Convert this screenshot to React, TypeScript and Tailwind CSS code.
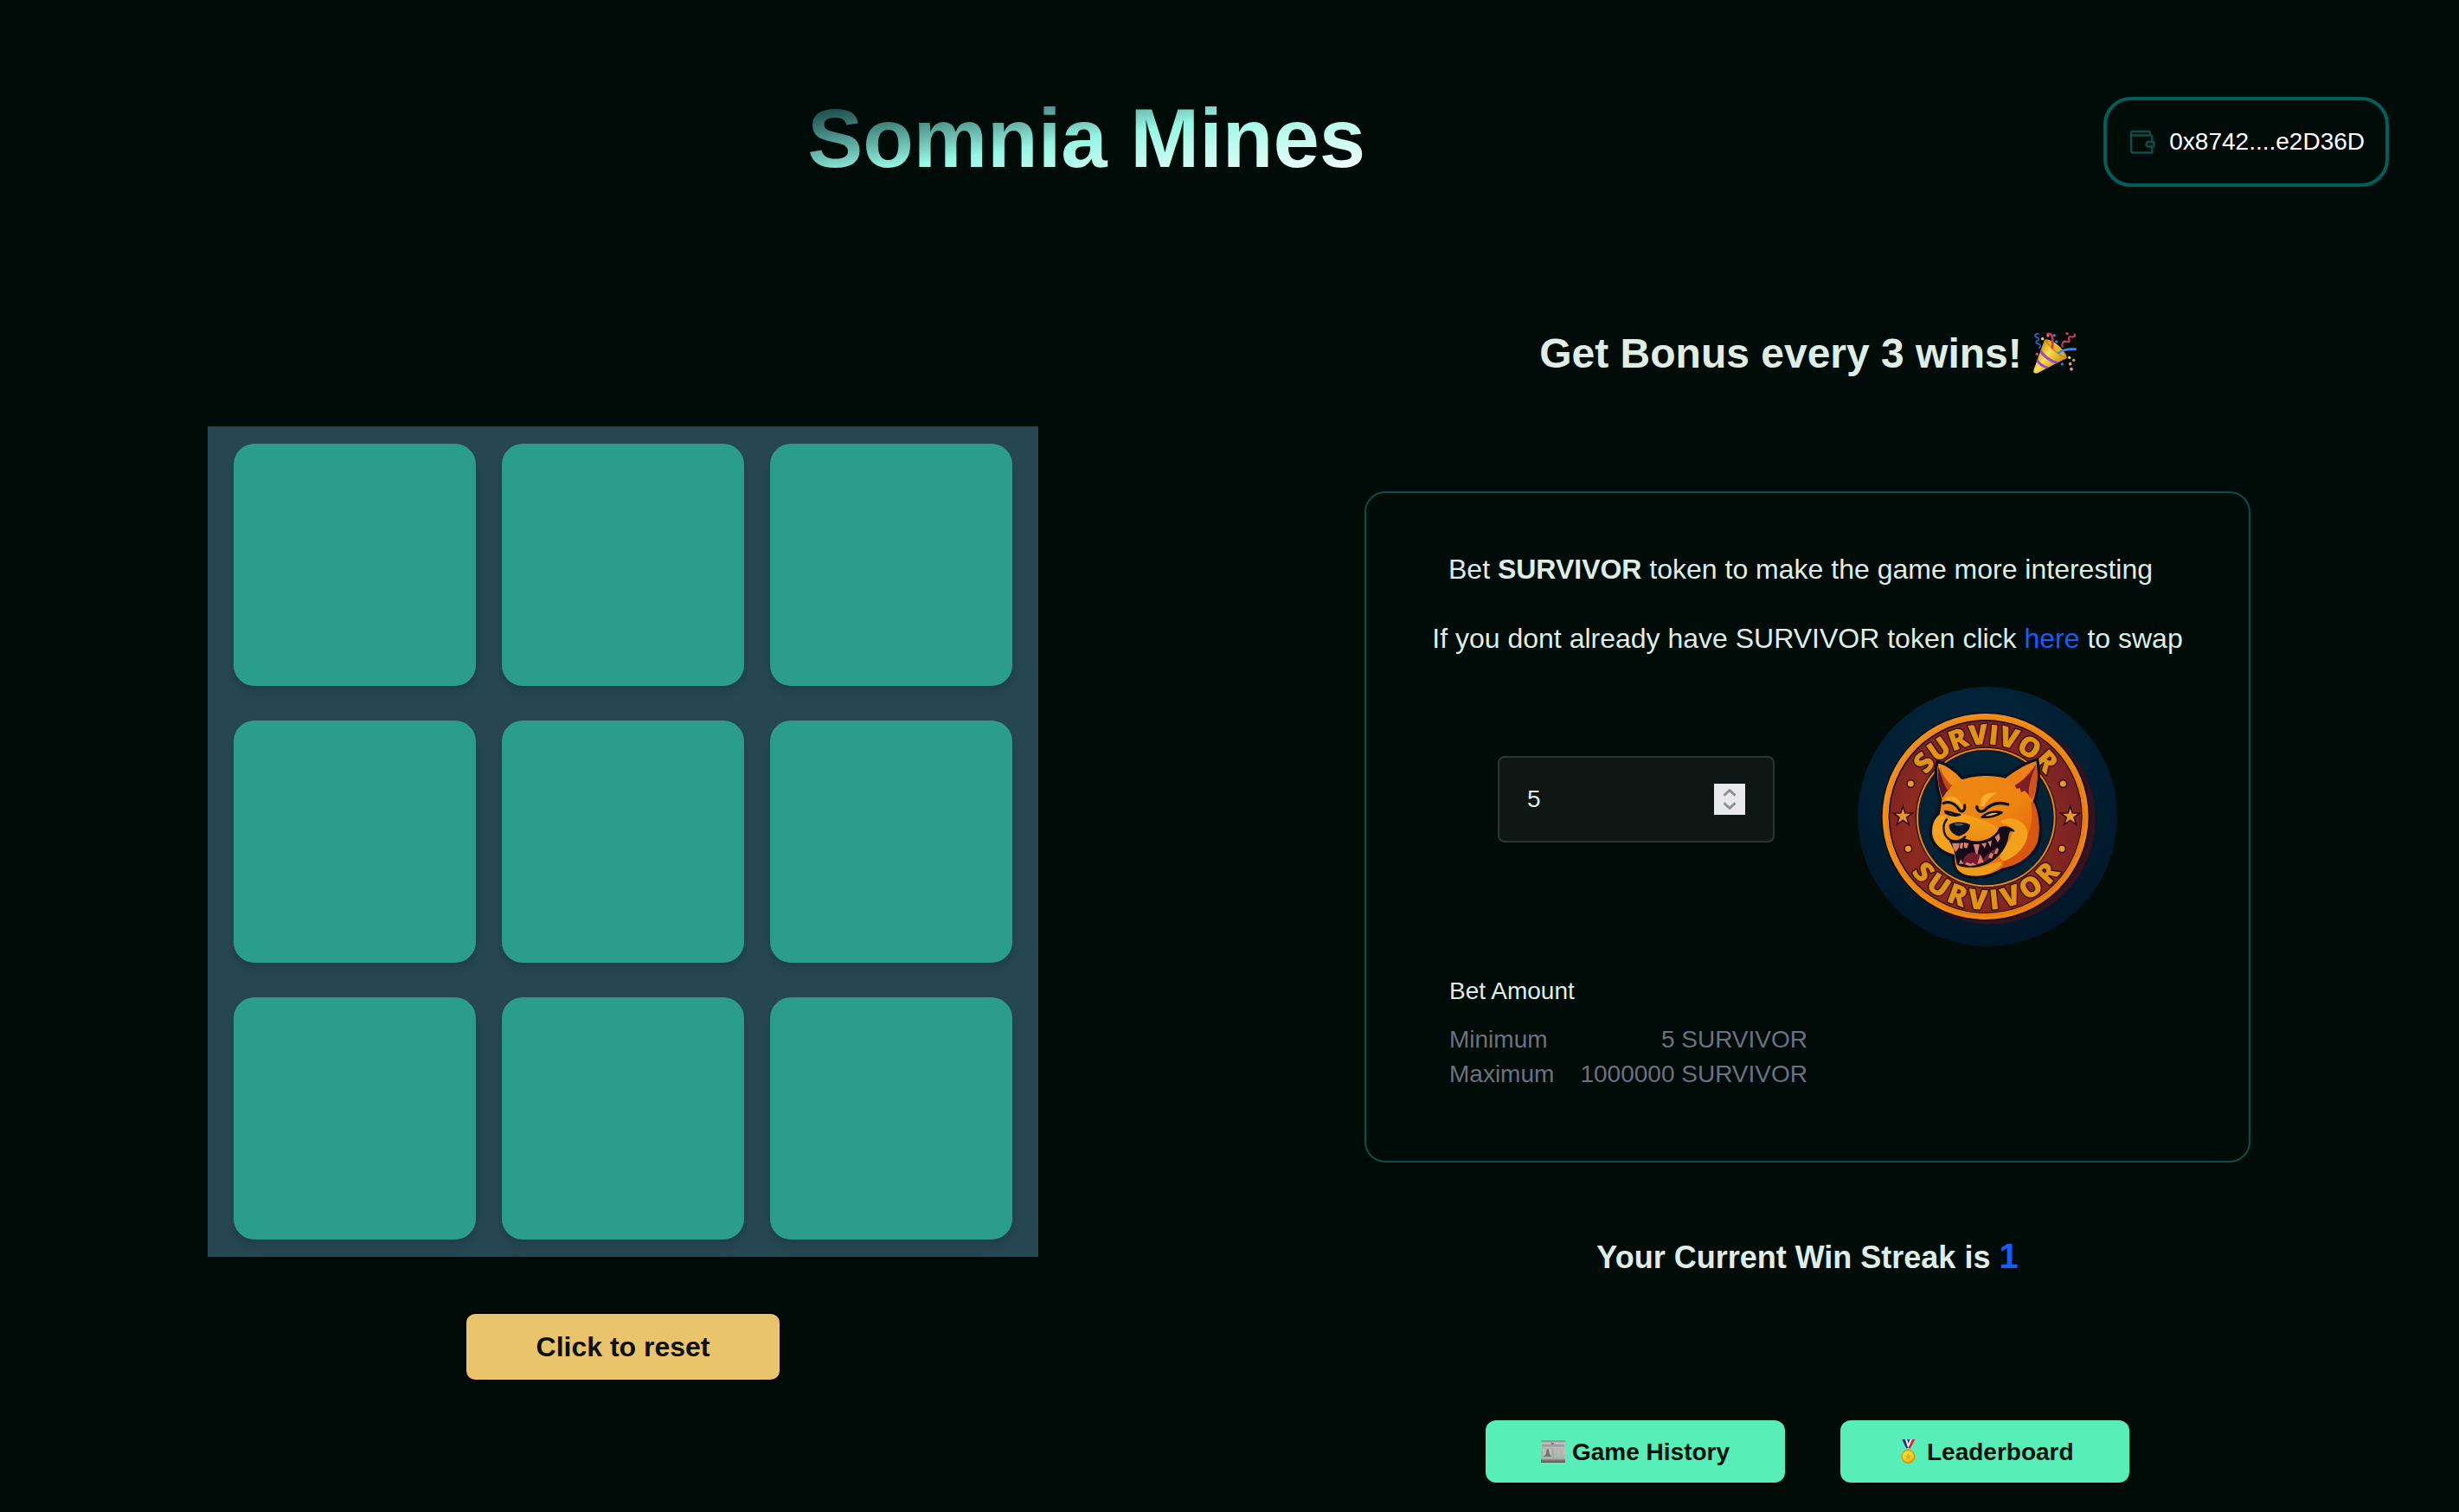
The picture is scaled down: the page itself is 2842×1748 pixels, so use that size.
import React from "react";

const CELLS = Array.from({ length: 9 }, (_, i) => i);

function WalletIcon() {
  return (
    <svg
      className="size-8 shrink-0 text-teal-900"
      viewBox="0 0 32 32"
      fill="none"
      stroke="currentColor"
      strokeWidth="2.3"
      strokeLinecap="round"
      strokeLinejoin="round"
    >
      <path d="M26 8.5V5.3A1.3 1.3 0 0 0 24.7 4H6.4a2.2 2.2 0 0 0 0 4.5h19.9a2 2 0 0 1 2 2V15.6" />
      <path d="M4.2 6.2v20.3a2 2 0 0 0 2 2h22.1v-6.3" />
      <path d="M30.4 16h-6.2a2.7 2.7 0 0 0 0 5.5h6.2z" />
    </svg>
  );
}

function PartyIcon() {
  return (
    <svg className="h-[65px] w-[70px] shrink-0" viewBox="0 0 210 195" fill="none">
      <defs>
        <linearGradient id="cone" x1="40" y1="90" x2="110" y2="140" gradientUnits="userSpaceOnUse">
          <stop offset="0" stopColor="#c98f10" />
          <stop offset="0.45" stopColor="#fbe04a" />
          <stop offset="1" stopColor="#d79a18" />
        </linearGradient>
        <clipPath id="coneClip">
          <path d="M69 50C62 70 38 135 31 157c-2 8 6 12 14 9 24-13 78-40 100-51 5-6-8-28-30-46-18-15-40-24-46-19z" />
        </clipPath>
      </defs>
      <path
        d="M69 50C62 70 38 135 31 157c-2 8 6 12 14 9 24-13 78-40 100-51 5-6-8-28-30-46-18-15-40-24-46-19z"
        fill="url(#cone)"
      />
      <g clipPath="url(#coneClip)" stroke="#a046cf" strokeWidth="9">
        <path d="M52 84c10 20 34 40 64 48" />
        <path d="M41 116c6 16 24 28 46 34" />
      </g>
      <path d="M71 52c14-5 66 36 73 60-22 0-66-40-73-60z" fill="#c7890f" />
      <path d="M78 54c16 2 52 30 62 52-12 0-50-26-62-52z" fill="#e4b42a" />
      <path d="M80 30c14-4 18 10 17 24-1 10 0 18-1 24" stroke="#e22c50" strokeWidth="8" strokeLinecap="round" />
      <path d="M118 96c12-12 30-14 58-13" stroke="#3f86ee" strokeWidth="8" strokeLinecap="round" />
      <path
        d="M48 30c-12-2-16 7-8 11 12 4 12 10 4 13-8 4-4 10 4 11 10 3 8 10 2 14"
        stroke="#2a66d8"
        strokeWidth="5"
        strokeLinecap="round"
      />
      <path
        d="M173 31c4 10-6 10-12 9-8-2-10 4-7 10 4 8-4 9-10 7-10-4-16 4-13 18"
        stroke="#dc3862"
        strokeWidth="6"
        strokeLinecap="round"
      />
      <circle cx="62" cy="47" r="5" fill="#fbe14a" />
      <circle cx="81" cy="36" r="5" fill="#f06a9a" />
      <circle cx="103" cy="35" r="5" fill="#2f7be6" />
      <circle cx="110" cy="57" r="5" fill="#2f7be6" />
      <circle cx="147" cy="29" r="5" fill="#d53a63" />
      <circle cx="43" cy="100" r="5" fill="#e0447a" />
      <circle cx="155" cy="112" r="5" fill="#fbe14a" />
      <circle cx="170" cy="121" r="5" fill="#ee9a2c" />
      <circle cx="130" cy="135" r="5" fill="#2f7be6" />
      <circle cx="158" cy="134" r="5.5" fill="#f0a030" />
      <circle cx="162" cy="152" r="5.5" fill="#f28bbd" />
    </svg>
  );
}

function NewspaperIcon() {
  return (
    <svg className="h-[26px] w-7 shrink-0" viewBox="0 0 84 78">
      <defs>
        <linearGradient id="paper" x1="0" y1="0" x2="0" y2="1">
          <stop offset="0" stopColor="#8f9191" />
          <stop offset="0.1" stopColor="#c3c5c5" />
          <stop offset="0.8" stopColor="#b4b6b6" />
          <stop offset="0.9" stopColor="#777979" />
          <stop offset="1" stopColor="#585a5a" />
        </linearGradient>
      </defs>
      <rect width="84" height="78" rx="2" fill="url(#paper)" />
      <rect x="2" y="4" width="80" height="3" fill="#8b8d8d" />
      <rect x="3" y="14" width="78" height="9" fill="#8f9191" opacity="0.75" />
      <path d="M34 6l5 5 6-1-2 4h-6z" fill="#4f5151" />
      <path d="M8 57l10-10 2-16h6l3 16 8 10z" fill="#727474" />
      <path d="M4 28h34v30H4z" fill="none" stroke="#a0a2a2" strokeWidth="2" />
      <path d="M42 26v42" stroke="#949696" strokeWidth="2" />
      <path
        d="M46 30h32M46 37h14M64 37h14M46 44h14M64 44h14M46 51h14M64 51h14M46 58h14M64 58h14"
        stroke="#a4a6a6"
        strokeWidth="2"
      />
    </svg>
  );
}

function MedalIcon() {
  return (
    <svg className="h-7 w-[17px] shrink-0" viewBox="0 0 51 84">
      <defs>
        <radialGradient id="gold" cx="0.45" cy="0.4" r="0.6">
          <stop offset="0" stopColor="#fff04a" />
          <stop offset="0.7" stopColor="#f4cf1c" />
          <stop offset="1" stopColor="#d99a10" />
        </radialGradient>
      </defs>
      <path d="M4 0h11l13 32h-9z" fill="#1d2f86" />
      <path d="M15 0h6l6 18-2 14z" fill="#f4f4fa" />
      <path d="M49 0H38L24 32h8z" fill="#e02334" />
      <path d="M38 0h-6l-5 14-3 18z" fill="#f1f1f7" />
      <path d="M32 0H21l5 14z" fill="#2b3fa0" />
      <path d="M20 30h11l3 11H17z" fill="#b0b4a0" />
      <circle cx="25" cy="60" r="24" fill="#cf9416" />
      <circle cx="25" cy="60" r="21" fill="url(#gold)" />
      <path d="M25 46l4 9 10 1-8 6 3 10-9-5-9 5 3-10-8-6 10-1z" fill="#d99b1a" opacity="0.75" />
    </svg>
  );
}

const STAR = "M0-33 8-10 33-10 13 5 21 30 0 15-21 30-13 5-33-10-8-10z";

function SurvivorCoin() {
  return (
    <svg className="size-[300px] shrink-0" viewBox="51 42 900 900">
      <defs>
        <radialGradient id="coinBack" cx="0.45" cy="0.25" r="0.8">
          <stop offset="0" stopColor="#02263d" />
          <stop offset="0.6" stopColor="#011d31" />
          <stop offset="1" stopColor="#011627" />
        </radialGradient>
        <linearGradient id="rim" x1="0" y1="0" x2="1" y2="1">
          <stop offset="0" stopColor="#f08d18" />
          <stop offset="0.5" stopColor="#ee8410" />
          <stop offset="1" stopColor="#e57608" />
        </linearGradient>
        <radialGradient id="band" cx="0.45" cy="0.55" r="0.6">
          <stop offset="0.6" stopColor="#8c2a1e" />
          <stop offset="1" stopColor="#742026" />
        </radialGradient>
        <linearGradient id="fur" x1="0" y1="0" x2="0.9" y2="1">
          <stop offset="0" stopColor="#ec8a14" />
          <stop offset="0.6" stopColor="#ee8310" />
          <stop offset="1" stopColor="#dc5a0e" />
        </linearGradient>
        <linearGradient id="muzzle" x1="0" y1="0" x2="0" y2="1">
          <stop offset="0" stopColor="#f4a51e" />
          <stop offset="1" stopColor="#ee8a12" />
        </linearGradient>
        <path id="arcTop" d="M243 493a252 252 0 0 1 504 0" />
        <path id="arcBottom" d="M173 493a322 322 0 0 0 644 0" />
      </defs>

      <circle cx="501" cy="492" r="450" fill="url(#coinBack)" />
      <circle cx="511" cy="501" r="364" fill="#38111f" />
      <circle cx="494" cy="492" r="362" fill="#0b1020" />
      <circle cx="494" cy="492" r="357" fill="url(#rim)" />
      <circle cx="494" cy="492" r="351" fill="none" stroke="#f7a233" strokeWidth="3" opacity="0.6" />
      <circle cx="494" cy="492" r="336" fill="#1a0d1c" />
      <circle cx="495" cy="493" r="332" fill="url(#band)" />
      <circle cx="496" cy="495" r="245" fill="#2b0f1c" />
      <circle cx="496" cy="495" r="241" fill="#e8860f" />
      <circle cx="496" cy="495" r="235" fill="#0a1422" />
      <circle cx="496" cy="495" r="232" fill="#022236" />

      <g
        className="font-['Open_Sans',sans-serif] font-extrabold [paint-order:stroke]"
        fontSize="96"
        fill="#e2940f"
        stroke="#3b0f1f"
        strokeWidth="9"
        strokeLinejoin="round"
        textAnchor="middle"
      >
        <text>
          <textPath href="#arcTop" startOffset="50%" textLength="484">
            SURVIVOR
          </textPath>
        </text>
        <text>
          <textPath href="#arcBottom" startOffset="50%" textLength="600">
            SURVIVOR
          </textPath>
        </text>
      </g>

      <g fill="#ea9a20" stroke="#3b0f1f" strokeWidth="5">
        <circle cx="235" cy="378" r="13" />
        <circle cx="763" cy="378" r="13" />
        <circle cx="226" cy="604" r="13" />
        <circle cx="759" cy="604" r="13" />
        <path d={STAR} transform="translate(208 490)" />
        <path d={STAR} transform="translate(788 490)" />
      </g>

      <g strokeLinejoin="round" strokeLinecap="round">
        {/* head and ears */}
        <path
          d="M327 302C318 330 322 385 338 432C336 450 335 465 330 482C312 498 302 520 304 552C308 592 345 618 383 628C382 650 384 672 400 686C425 704 480 708 516 694C535 686 548 680 556 674C610 664 664 628 680 580C690 540 684 480 664 440C678 400 684 340 674 294C640 302 590 330 562 354C520 342 460 344 414 358C388 328 354 306 327 302Z"
          fill="url(#fur)"
          stroke="#07111f"
          strokeWidth="10"
        />
        <path d="M332 312C350 318 384 338 408 362C394 376 376 384 362 396C348 372 338 342 332 312Z" fill="#f08a18" />
        <path d="M331 318C340 350 352 376 372 392C362 402 352 414 346 428C332 396 326 354 331 318Z" fill="#5b1626" />
        <path d="M336 322C348 352 364 376 380 384L362 400C350 380 340 352 336 322Z" fill="#c34a14" />
        <path d="M672 300C636 312 596 336 570 362C578 372 584 380 588 390C616 372 648 340 672 300Z" fill="#f07f18" />
        <path
          d="M668 312C650 342 622 368 596 384L602 396L612 392L618 408L630 402L656 430C672 392 676 350 668 312Z"
          fill="#7d1d26"
        />
        <path d="M670 312C656 350 642 380 644 420L657 432C674 392 678 350 670 312Z" fill="#d2521a" />
        {/* shaded cheek */}
        <path
          d="M664 446C686 500 684 560 664 600C640 640 600 662 558 670C548 650 566 632 590 616C640 580 668 520 650 440Z"
          fill="#d9560f"
        />
        <path
          d="M545 508C580 488 628 500 640 542C644 588 606 628 560 646C536 640 548 616 560 600C580 572 592 552 586 532C572 520 556 520 545 508Z"
          fill="#f3a01c"
        />
        {/* left cheek and muzzle */}
        <path
          d="M332 488C306 510 304 560 330 592C346 608 364 618 384 620L384 590C358 576 346 556 346 536C346 512 352 496 362 486Z"
          fill="#f5a21e"
        />
        <path
          d="M362 500C344 520 346 552 366 570C384 584 410 576 424 570C470 588 520 574 550 538C520 516 470 500 440 490C410 478 380 482 362 500Z"
          fill="url(#muzzle)"
        />
        <path d="M360 502C340 526 348 566 380 576C398 580 414 572 424 562" fill="none" stroke="#07111f" strokeWidth="7" />
        {/* mouth */}
        <path
          d="M372 576C392 582 408 578 424 572C470 592 528 574 544 532C560 526 576 528 592 542C580 536 574 542 572 556C566 606 524 654 466 664C436 668 408 664 398 656C394 636 392 622 388 608Z"
          fill="#160b1b"
          stroke="#07111f"
          strokeWidth="6"
        />
        <path
          d="M416 656C416 628 438 612 462 618C478 622 486 630 486 640C500 624 520 606 534 600C526 630 494 656 458 660Z"
          fill="#741c2c"
        />
        <path
          d="M378 584L404 584L402 600L392 614L384 606ZM406 584L418 583L414 604L405 602ZM420 582L436 585L430 602L420 600ZM452 588L474 588L466 624Q460 622 458 610ZM480 586L498 583L492 602ZM502 580L516 575L512 598ZM527 564L541 550L545 568L537 582Z"
          fill="#d8806a"
        />
        <path
          d="M402 656L408 640L418 656ZM422 658L430 650L444 656L450 652L464 660L440 664ZM466 656L476 624L488 650ZM504 634L512 618L522 622L516 638ZM524 620L534 600L540 606L534 622Z"
          fill="#d8806a"
        />
        <path
          d="M392 662C420 676 470 674 504 660C520 654 540 650 552 648C552 666 520 690 480 696C440 702 402 694 392 662Z"
          fill="#f09a1a"
        />
        {/* nose */}
        <path d="M368 522C376 508 422 508 440 520C444 534 424 556 402 560C384 556 366 540 368 522Z" fill="#0b1426" />
        <path d="M384 518C396 514 412 514 420 520C410 526 394 526 384 518Z" fill="#4b5568" />
        {/* brows and eyes */}
        <path d="M352 434C362 420 386 416 402 436C412 448 414 456 414 466C396 440 376 434 352 434Z" fill="#f6ae2c" />
        <path d="M476 456C474 420 500 402 534 412C520 418 500 434 490 456Z" fill="#f6ae2c" />
        <path d="M348 446C372 436 392 450 406 472C416 478 424 470 422 452" fill="none" stroke="#07111f" strokeWidth="9" />
        <path d="M464 458C466 476 480 478 492 470C512 448 540 440 572 450" fill="none" stroke="#07111f" strokeWidth="10" />
        <path d="M354 474C370 476 386 482 406 486C390 492 372 488 358 480Z" fill="#f3b35a" stroke="#07111f" strokeWidth="7" />
        <path
          d="M482 494C500 478 524 472 550 478C530 490 508 496 482 494Z"
          fill="#f3b35a"
          stroke="#07111f"
          strokeWidth="8"
        />
      </g>
    </svg>
  );
}

function Spinner() {
  return (
    <span className="flex size-9 items-center justify-center bg-[#e9e8ed]">
      <svg
        className="h-6 w-4"
        viewBox="0 0 16 24"
        fill="none"
        stroke="#8f8e9b"
        strokeWidth="2.8"
        strokeLinecap="round"
        strokeLinejoin="round"
      >
        <path d="M2.3 6.9 8 1.6l5.7 5.3" />
        <path d="M2.3 17.1 8 22.4l5.7-5.3" />
      </svg>
    </span>
  );
}

function Header() {
  return (
    <header className="flex h-[216px] items-start justify-between pt-28 pr-[81px] pl-20">
      <div />
      <h1 className="bg-linear-to-br from-teal-950 via-teal-200 to-white bg-clip-text text-8xl leading-none font-bold tracking-[-0.05px] text-transparent">
        Somnia Mines
      </h1>
      <button className="flex h-[104px] items-center gap-4 rounded-[32px] border-4 border-teal-800 px-6 text-[28px] leading-10 text-white">
        <WalletIcon />
        0x8742....e2D36D
      </button>
    </header>
  );
}

function Board() {
  return (
    <section className="mt-[277px] ml-60 flex w-[960px] flex-col items-center">
      <div className="grid size-[960px] grid-cols-3 gap-x-[30px] gap-y-10 bg-[#264653] px-[30px] py-5">
        {CELLS.map((cell) => (
          <div
            key={cell}
            className="size-[280px] rounded-3xl bg-[#2a9d8f] shadow-[0_8px_12px_-2px_rgba(0,0,0,0.1),0_4px_8px_-4px_rgba(0,0,0,0.1)]"
          />
        ))}
      </div>
      <button className="mt-16 h-20 w-[366px] rounded-xl border-2 border-black bg-[#e9c46a] text-[32px] font-bold text-[#0a0f0c]">
        Click to reset
      </button>
    </section>
  );
}

function BetPanel() {
  return (
    <div className="mt-[135px] flex h-[776px] w-[1024px] flex-col items-center rounded-3xl border-2 border-teal-900 pt-[60px]">
      <p className="mr-4 text-[32px] leading-[56px]">
        Bet <strong>SURVIVOR</strong> token to make the game more interesting
      </p>
      <p className="mt-6 text-[32px] leading-[56px]">
        If you dont already have SURVIVOR token click <a className="text-blue-600">here</a> to swap
      </p>
      <div className="mt-7 flex h-[300px] w-full items-start pl-[152px]">
        <div className="mt-20 flex h-[100px] w-80 items-center justify-between rounded-lg border-2 border-[#2c3632] bg-[#0e1713] px-8 text-[28px]">
          <span>5</span>
          <Spinner />
        </div>
        <div className="ml-24">
          <SurvivorCoin />
        </div>
      </div>
      <div className="mt-8 w-full pl-24 text-[28px] leading-10">
        <div>Bet Amount</div>
        <dl className="mt-4 grid w-[414px] grid-cols-[auto_auto] justify-between text-gray-500">
          <dt>Minimum</dt>
          <dd className="text-right">5 SURVIVOR</dd>
          <dt>Maximum</dt>
          <dd className="text-right">1000000 SURVIVOR</dd>
        </dl>
      </div>
    </div>
  );
}

function SidePanel() {
  return (
    <section className="mt-[169px] ml-[377px] flex w-[1024px] flex-col items-center">
      <h2 className="flex h-12 items-center text-5xl leading-none font-bold">
        Get Bonus every 3 wins!
        <span className="-mt-px ml-[3px] -mr-[11px] flex">
          <PartyIcon />
        </span>
      </h2>
      <BetPanel />
      <p className="mt-[82px] h-14 text-4xl leading-[56px] font-bold">
        Your Current Win Streak is <span className="text-[40px] leading-none text-blue-600">1</span>
      </p>
      <div className="mt-40 flex gap-16 text-[28px] font-bold text-[#0a0f0c]">
        <button className="flex h-[72px] w-[346px] items-center rounded-xl bg-[#57eeb7] pl-16">
          <NewspaperIcon />
          <span className="mt-0.5 ml-2">Game History</span>
        </button>
        <button className="flex h-[72px] w-[334px] items-center rounded-xl bg-[#57eeb7] pl-[70px]">
          <MedalIcon />
          <span className="mt-0.5 ml-[13px]">Leaderboard</span>
        </button>
      </div>
    </section>
  );
}

export default function App() {
  return (
    <div className="h-[1748px] w-[2842px] overflow-hidden bg-[#010b07] font-['Liberation_Sans',Arial,sans-serif] text-[#dfeee4]">
      <Header />
      <main className="flex items-start">
        <Board />
        <SidePanel />
      </main>
    </div>
  );
}
